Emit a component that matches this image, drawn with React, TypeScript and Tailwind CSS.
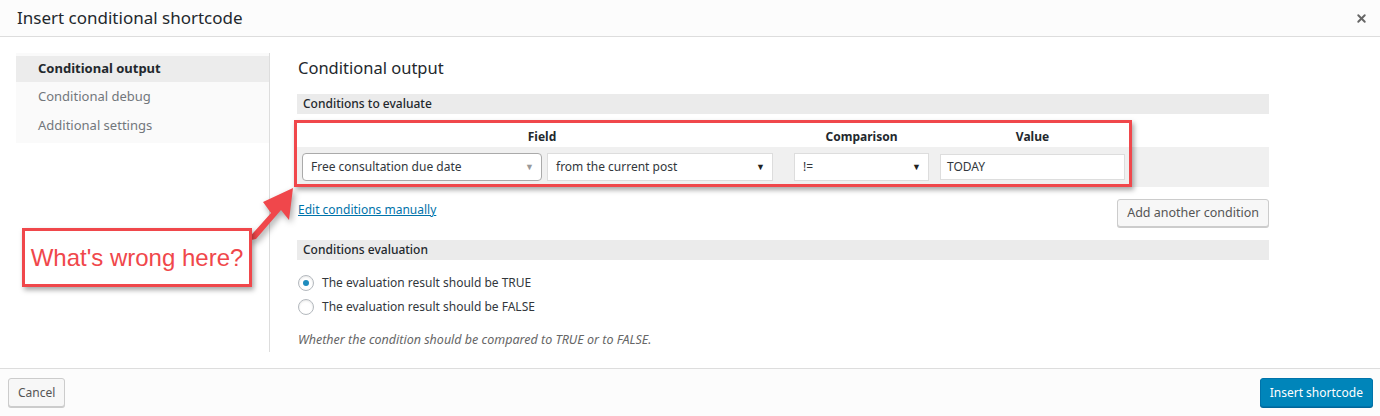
/* Insert conditional shortcode — dialog with annotation overlay */
import { X } from "lucide-react";

const font = { fontFamily: '"Noto Sans", "Open Sans", sans-serif' };

const SelectBox = ({ text, className, rounded }: { text: string; className: string; rounded?: boolean }) => (
  <div
    className={`h-[28px] flex items-center justify-between bg-white pl-[8px] pr-[7px] text-[12px] text-[#32373c] ${
      rounded ? "rounded-[4px] border border-[#aaa]" : "border border-[#ddd]"
    } ${className}`}
  >
    <span>{text}</span>
    <span className={`text-[9px] ${rounded ? "text-[#999]" : "text-[#222]"}`}>▼</span>
  </div>
);

const Radio = ({ checked, label }: { checked?: boolean; label: string }) => (
  <label className="flex items-center gap-[8px] h-[24px]">
    <span className="w-[16px] h-[16px] rounded-full border border-[#b4b9be] bg-white shadow-[inset_0_1px_2px_rgba(0,0,0,0.1)] flex items-center justify-center">
      {checked && <span className="w-[6px] h-[6px] rounded-full bg-[#1e8cbe]" />}
    </span>
    <span className="text-[12px] text-[#32373c]">{label}</span>
  </label>
);

export default function App() {
  return (
    <div className="relative w-[1380px] h-[416px] bg-white flex flex-col overflow-hidden text-[#23282d]" style={font}>
      {/* Header */}
      <div className="h-[37px] shrink-0 flex items-center justify-between pl-[17px] pr-[12px] bg-[#fcfcfc] border-b border-[#ddd]">
        <h1 className="text-[17px] text-[#23282d]">Insert conditional shortcode</h1>
        <X size={13} strokeWidth={3.5} className="text-[#666]" />
      </div>

      {/* Body */}
      <div className="flex-1 flex pt-[16px] pl-[16px]">
        <div className="w-[254px] shrink-0 border-r border-[#ddd] h-[299px]">
          <div className="bg-[#fafafa] py-[3px]">
            <div className="h-[26px] flex items-center pl-[22px] bg-[#ececec] text-[13px] font-bold text-[#23282d]">Conditional output</div>
            <div className="h-[29px] flex items-center pl-[22px] text-[13px] text-[#72777c]">Conditional debug</div>
            <div className="h-[29px] flex items-center pl-[22px] text-[13px] text-[#72777c]">Additional settings</div>
          </div>
        </div>

        <div className="ml-[27px] w-[972px]">
          <h2 className="text-[16.5px] leading-[32px] pl-[1px] -mt-[1px] text-[#23282d]">Conditional output</h2>

          <div className="mt-[10px] h-[20px] bg-[#ebebeb] flex items-center pl-[6px] text-[12px] font-medium text-[#23282d]">Conditions to evaluate</div>

          {/* Conditions table */}
          <div className="mt-[13px] grid grid-cols-[490px_149px_193px_1fr]">
            <div className="h-[20px] flex items-center justify-center text-[12px] font-bold">Field</div>
            <div className="h-[20px] flex items-center justify-center text-[12px] font-bold">Comparison</div>
            <div className="h-[20px] flex items-center justify-center text-[12px] font-bold">Value</div>
            <div />
            <div className="h-[40px] bg-[#f0f0f0] flex items-center gap-[5px] pl-[5px]">
              <SelectBox text="Free consultation due date" className="w-[240px]" rounded />
              <SelectBox text="from the current post" className="w-[226px]" />
            </div>
            <div className="h-[40px] bg-[#f0f0f0] flex items-center pl-[7px]">
              <SelectBox text="!=" className="w-[135px]" />
            </div>
            <div className="h-[40px] bg-[#f0f0f0] flex items-center pl-[4px]">
              <div className="w-[185px] h-[26px] bg-white border border-[#ddd] flex items-center pl-[6px] text-[12px] text-[#32373c]">TODAY</div>
            </div>
            <div className="h-[40px] bg-[#f0f0f0]" />
          </div>

          <div className="mt-[12px] flex items-start justify-between">
            <a className="mt-[2px] text-[12px] text-[#0073aa] underline pl-[1px]">Edit conditions manually</a>
            <button className="h-[28px] px-[9px] rounded-[3px] border border-[#ccc] bg-[#f7f7f7] shadow-[0_1px_0_#ccc] text-[12.5px] text-[#555]">
              Add another condition
            </button>
          </div>

          <div className="mt-[13px] h-[20px] bg-[#ebebeb] flex items-center pl-[6px] text-[12px] font-medium text-[#23282d]">Conditions evaluation</div>

          <div className="mt-[11px] pl-[1px] flex flex-col">
            <Radio checked label="The evaluation result should be TRUE" />
            <Radio label="The evaluation result should be FALSE" />
          </div>

          <p className="mt-[12px] pl-[1px] text-[12.5px] italic text-[#666]">Whether the condition should be compared to TRUE or to FALSE.</p>
        </div>
      </div>

      {/* Footer */}
      <div className="h-[48px] shrink-0 bg-[#fcfcfc] border-t border-[#ddd] flex items-center justify-between pl-[8px] pr-[7px]">
        <button className="h-[29px] px-[9px] rounded-[3px] border border-[#ccc] bg-[#f7f7f7] shadow-[0_1px_0_#ccc] text-[12px] text-[#555]">Cancel</button>
        <button className="h-[29px] px-[9px] rounded-[3px] border border-[#0073aa] bg-[#0085ba] shadow-[0_1px_0_#006799] text-[12px] text-white">Insert shortcode</button>
      </div>

      {/* Annotation: red highlight box */}
      <div className="absolute left-[294px] top-[120px] w-[838px] h-[67px] border-[3px] border-[#f0474b] shadow-[2px_3px_5px_rgba(0,0,0,0.35)] pointer-events-none" />

      {/* Annotation: arrow */}
      <svg className="absolute left-0 top-0 pointer-events-none" width="1380" height="416" style={{ filter: "drop-shadow(2px 3px 3px rgba(0,0,0,0.35))" }}>
        <path d="M246 241 L271 213 L263 202 L293 188 L289 220 L281 210 L256 239 Z" fill="#f0474b" />
      </svg>

      {/* Annotation: callout */}
      <div className="absolute left-[22px] top-[228px] w-[230px] h-[59px] border-[3px] border-[#f0474b] bg-white shadow-[2px_3px_5px_rgba(0,0,0,0.35)] flex items-center justify-center">
        <span className="text-[24px] text-[#f0474b]" style={{ fontFamily: '"Liberation Sans", Arial, sans-serif' }}>What's wrong here?</span>
      </div>
    </div>
  );
}
